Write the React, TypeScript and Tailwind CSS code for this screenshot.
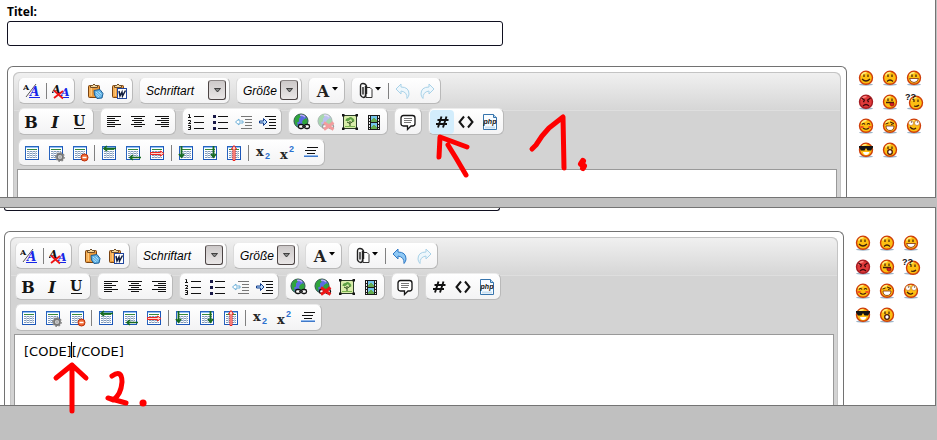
import React from "react";

type Kids = { children?: React.ReactNode };

function Icon({ children, dim }: Kids & { dim?: boolean }) {
  return (
    <svg
      width="18"
      height="18"
      viewBox="0 0 18 18"
      fill="none"
      aria-hidden="true"
      className={dim ? "opacity-40" : ""}
    >
      {children}
    </svg>
  );
}

function Tool({ label, active, dim, children }: Kids & { label: string; active?: boolean; dim?: boolean }) {
  return (
    <button
      type="button"
      title={label}
      aria-label={label}
      className={
        "flex h-6 w-6 items-center justify-center rounded-sm " + (active ? "bg-[#d3edfc]" : "")
      }
    >
      <Icon dim={dim}>{children}</Icon>
    </button>
  );
}

function Group({ children }: Kids) {
  return (
    <div className="relative flex h-[27px] shrink-0 items-center rounded-md border border-[#b9b9b9] border-t-[#ececec] border-l-[#dadada] bg-gradient-to-b from-white to-[#f3f3f4] px-px">
      {children}
    </div>
  );
}

function Sep() {
  return (
    <div className="flex w-[5px] justify-center">
      <div className="h-4 w-px bg-[#808080]" />
    </div>
  );
}

function FontSelect({ label, width }: { label: string; width: string }) {
  return (
    <Group>
      <select
        aria-label={label}
        className={
          "h-6 appearance-none bg-transparent pl-[5px] font-['Liberation_Sans',Arial,sans-serif] text-xs text-black italic outline-none " +
          width
        }
      >
        <option>{label}</option>
      </select>
      <span className="pointer-events-none absolute top-[2px] right-[3px] flex h-5 w-[18px] items-center justify-center rounded-[3px] border border-[#4c4444] border-t-[#8b8585] bg-gradient-to-b from-[#cdc9c9] to-[#e9e6e6]">
        <svg width="7" height="5" viewBox="0 0 7 5" aria-hidden="true">
          <path d="M.5 .5h6L3.5 4z" fill="#888" stroke="#222" strokeWidth=".8" />
        </svg>
      </span>
    </Group>
  );
}

function DropTool({ label, children }: Kids & { label: string }) {
  return (
    <button type="button" aria-label={label} title={label} className="flex h-6 w-[33px] items-center pl-1">
      <Icon>{children}</Icon>
      <svg width="7" height="4" viewBox="0 0 7 4" className="-mt-1" aria-hidden="true">
        <path d="M0 0h6L3 3.500z" fill="#000" />
      </svg>
    </button>
  );
}

const serif = "DejaVu Serif, serif";
const sans = "Liberation Sans, sans-serif";

function DoubleA({ removed }: { removed?: boolean }) {
  return (
    <>
      {removed ? (
        <>
          <text x="0" y="11" fontFamily={serif} fontSize="11" fontWeight="700" fontStyle="italic" fill="#111">A</text>
          <text x="9" y="14" fontFamily={serif} fontSize="11" fontWeight="700" fontStyle="italic" fill="#1626e8">A</text>
          <path d="M11 15.500h6" stroke="#1626e8" />
          <path d="M2 8.500l9 8M11 9L2 16" stroke="#ee1515" strokeWidth="1.800" />
        </>
      ) : (
        <>
          <text x="0" y="8" fontFamily={serif} fontSize="8" fontWeight="700" fill="#111">A</text>
          <path d="M3 15L13 2" stroke="#555" />
          <text x="7" y="14" fontFamily={serif} fontSize="12" fontWeight="700" fontStyle="italic" fill="#1626e8">A</text>
          <path d="M6 15.500h11" stroke="#1626e8" />
        </>
      )}
    </>
  );
}

function Clipboard() {
  return (
    <>
      <rect x="2.500" y="3.500" width="11" height="12" rx="1" fill="#e9983a" stroke="#7a4310" />
      <path d="M4 5v9M5.500 5v9" stroke="#ffc777" />
      <path d="M4.500 5.500v-2h2q1.500-3 3 0h2v2z" fill="#f4d69b" stroke="#6b4a26" />
    </>
  );
}

function PasteText() {
  return (
    <>
      <Clipboard />
      <path d="M8 8.500l6-1 3 4-1 4.500-5 .5L8.500 13z" fill="#5fb2e4" stroke="#1e5e96" />
      <path d="M10 10l4.500 4M10 12.500l3 2.500M12.500 9.500l3 3" stroke="#c7eaff" strokeWidth=".8" />
    </>
  );
}

function PasteWord() {
  return (
    <>
      <Clipboard />
      <rect x="7.500" y="6.500" width="9" height="10" fill="#fff" stroke="#21469e" />
      <path d="M9 9l1 5 2-4 .5 4L15.500 8.500" stroke="#111d3d" strokeWidth="1.500" />
    </>
  );
}

function Letter({ kind }: { kind: "B" | "I" | "U" }) {
  return (
    <>
      <text
        x="8"
        y={kind === "U" ? 13 : 15}
        textAnchor="middle"
        fontFamily={serif}
        fontSize={kind === "U" ? 14 : 16}
        fontWeight="700"
        fontStyle={kind === "I" ? "italic" : "normal"}
        fill="#151515"
      >
        {kind}
      </text>
      {kind === "U" && <path d="M3 15.500h11" stroke="#151515" />}
    </>
  );
}

function Align({ kind }: { kind: "left" | "center" | "right" }) {
  const rows = [14, 8, 12, 8, 14, 8];
  return (
    <g shapeRendering="crispEdges" fill="#111">
      {rows.map((w, i) => (
        <rect
          key={i}
          x={kind === "left" ? 2 : kind === "right" ? 16 - w : 9 - w / 2}
          y={3 + i * 2}
          width={w}
          height="1"
        />
      ))}
    </g>
  );
}

function NumberList() {
  return (
    <>
      <path d="M7 3.500h10M7 9.500h10M7 15.500h10" stroke="#111" shapeRendering="crispEdges" />
      <path d="M1.500 1.500h1v3M1 4.500h3M1 7.500h2.500v1.500L1.500 10.500h2.500M1 12.500h2.500v4H1M1.500 14.500h2" stroke="#111" />
    </>
  );
}

function BulletList() {
  return (
    <g shapeRendering="crispEdges">
      <path d="M7 3.500h10M7 9.500h10M7 15.500h10" stroke="#111" />
      <path d="M2 2h3v3H2zM2 8h3v3H2zM2 14h3v3H2z" fill="#181848" />
    </g>
  );
}

function Indent({ out }: { out?: boolean }) {
  return (
    <>
      <g stroke={out ? "#777" : "#111"} shapeRendering="crispEdges">
        <path d="M6 3.500h11M10 6.500h7M10 9.500h7M10 12.500h7M6 15.500h11" />
      </g>
      {out ? (
        <path d="M.5 9l3.500-3v2h4v2H4v2z" fill="#fff" stroke="#6fb0d8" />
      ) : (
        <path d="M8 9L4.500 5.500V8h-4v2h4v2.500z" fill="#bfe1ff" stroke="#123c8c" />
      )}
    </>
  );
}

function Globe({ cut }: { cut?: boolean }) {
  return (
    <>
      <circle cx="8" cy="8" r="7" fill="#5a6be0" stroke="#25532d" />
      <path d="M2 5q2-3.500 5-3.500l1 2-2 2 0 3-2 1 1 3-2 0q-2-3-1-7.500zM10 7l3-2 1.500 2-.5 4-4 1-1-3z" fill="#2fa53b" />
      <path d="M7 2.500q3-1 5 1.500" stroke="#b9a8f5" strokeWidth="1.500" />
      <rect x="5.500" y="11.500" width="5" height="4" rx="1.800" fill="#fff" stroke="#111" strokeWidth="1.300" />
      <rect x="11.500" y="11.500" width="5" height="4" rx="1.800" fill="#fff" stroke="#111" strokeWidth="1.300" />
      <path d="M9 13.500h4" stroke="#333" />
      {cut && <path d="M7 9.500l9.500 7M16.500 9.500L7 16.500" stroke="#ed1717" strokeWidth="2.800" />}
    </>
  );
}

function Picture() {
  return (
    <>
      <rect x="2.500" y="2.500" width="13" height="13" fill="#d9edaa" stroke="#2a3a28" />
      <path d="M9 13.500V8M9.500 10l3-2M9 10.500L6 9" stroke="#284b19" />
      <path d="M4.500 8q0-3 3-3 2-2 4 0 2.500 1 1.500 4l-2-1-1-2-2.500 2z" fill="#5da044" />
      <path d="M4 13.500h10" stroke="#7bb551" />
      <path d="M1 1h2.500v2.500H1zM14.500 1H17v2.500h-2.500zM1 14.500h2.500V17H1zM14.500 14.500H17V17h-2.500z" fill="#151515" />
    </>
  );
}

function Film() {
  return (
    <g shapeRendering="crispEdges">
      <path d="M3 2h12v15H3z" fill="#1a1a1a" />
      <path d="M6 3h6v6H6zM6 10h6v6H6z" fill="#74c4ea" />
      <path d="M6 7l3-2 3 2v2H6zM6 14l3-2 3 2v2H6z" fill="#67ad52" />
      <path d="M4.500 3v13M13.500 3v13" stroke="#eee" strokeDasharray="2 1" />
    </g>
  );
}

function Quote() {
  return (
    <>
      <path d="M4.500 2.500h9q2.500 0 2.500 2.500v5.500q0 2.500-2.500 2.500H12l-3.500 3.500V13h-4Q2 13 2 10.500V5q0-2.500 2.500-2.500z" fill="#fff" stroke="#151515" strokeWidth="1.300" />
      <path d="M5 5.500h8M5 7.500h8M5 9.500h7" stroke="#777" shapeRendering="crispEdges" />
    </>
  );
}

function Php() {
  return (
    <>
      <path d="M2.500 1.500h10l3 3v12h-13z" fill="#f8fcff" stroke="#3674ac" />
      <path d="M12.500 1.500v3h3" fill="#b9d8ef" stroke="#3674ac" />
      <path d="M4 14.500h10" stroke="#c8dff0" strokeWidth="2" />
      <text x="9" y="11" textAnchor="middle" fontFamily={sans} fontSize="7" fontWeight="700" fontStyle="italic" fill="#111">
        php
      </text>
    </>
  );
}

function Undo({ redo, pale }: { redo?: boolean; pale?: boolean }) {
  return (
    <g transform={redo ? "translate(18 0) scale(-1 1)" : undefined}>
      <path
        d="M2 7l5-5v3q8 0 8 7 0 2.500-2 4.500Q13.500 10 7 9v3z"
        fill={pale ? "#eef7fc" : "#8fc8f4"}
        stroke={pale ? "#a9d2e8" : "#2f79c5"}
      />
    </g>
  );
}

type TableKind =
  | "table" | "props" | "delete"
  | "rowAbove" | "rowBelow" | "rowDelete"
  | "colLeft" | "colRight" | "colDelete";

function TableIcon({ kind }: { kind: TableKind }) {
  return (
    <>
      <g shapeRendering="crispEdges">
        <rect x="2.500" y="2.500" width="13" height="13" fill="#fff" stroke="#2763bf" />
        <path d="M3 3.500h12" stroke="#8fc2f5" />
        <path d="M4 5.500h10" stroke="#36883a" />
        <path d="M4 7.500h10M4 9.500h10M4 11.500h10M4 13.500h10" stroke="#8199b8" />
        <path d="M6.500 7v7M9.500 7v7M12.500 7v7" stroke="#c2d0e2" />
        <path d="M15.500 3v13M3 15.500h13" stroke="#1a55b8" />
      </g>
      {kind === "props" && (
        <>
          <circle cx="13" cy="13" r="3" fill="#ddd" stroke="#777" strokeWidth="1.800" />
          <circle cx="13" cy="13" r="4.300" stroke="#888" strokeWidth="1.200" strokeDasharray="1.800 1.500" />
          <circle cx="13" cy="13" r="1" fill="#fff" stroke="#777" strokeWidth=".6" />
        </>
      )}
      {kind === "delete" && (
        <>
          <circle cx="13.500" cy="13.500" r="3.500" fill="#ef6a35" stroke="#bd2d08" />
          <path d="M11.500 13.500h4" stroke="#fff" strokeWidth="1.500" />
        </>
      )}
      {kind === "rowAbove" && <path d="M16 4.500H4M7 2L4 4.500 7 7" stroke="#176a20" strokeWidth="1.600" />}
      {kind === "rowBelow" && <path d="M17 13.500H6M9 11l-3 2.500L9 16" stroke="#176a20" strokeWidth="1.600" />}
      {kind === "rowDelete" && (
        <path d="M2.500 8.500h10V7l3.500 2.500-3.500 2.500v-1.500h-10z" fill="#ffd5ca" stroke="#ed2520" />
      )}
      {kind === "colLeft" && <path d="M4.500 2v11M2 10l2.500 3L7 10" stroke="#176a20" strokeWidth="1.800" />}
      {kind === "colRight" && <path d="M12.500 2v11M10 10l2.500 3 2.500-3" stroke="#176a20" strokeWidth="1.800" />}
      {kind === "colDelete" && (
        <path d="M8 16.500V5H6.500L9 1.500 11.500 5H10v11.500z" fill="#ffd5ca" stroke="#ed2520" />
      )}
    </>
  );
}

function Script({ sup }: { sup?: boolean }) {
  return (
    <>
      <text x="2" y={sup ? 15 : 12} fontFamily={serif} fontSize="13" fontWeight="700" fill="#252525">x</text>
      <text x="11" y={sup ? 8 : 15} fontFamily={sans} fontSize="9" fontWeight="700" fill="#2b70cf">2</text>
    </>
  );
}

function Toolbar({ codeActive, history, outlined }: { codeActive?: boolean; history?: boolean; outlined?: boolean }) {
  const tables: [TableKind, string][][] = [
    [["table", "Tabelle"], ["props", "Tabelleneigenschaften"], ["delete", "Tabelle löschen"]],
    [["rowAbove", "Zeile oberhalb"], ["rowBelow", "Zeile unterhalb"], ["rowDelete", "Zeile entfernen"]],
    [["colLeft", "Spalte links"], ["colRight", "Spalte rechts"], ["colDelete", "Spalte löschen"]],
  ];
  return (
    <div role="toolbar" className="flex flex-col gap-1 px-1 pt-1 pb-[3px]">
      <div className="flex gap-1.5">
        <Group>
          <Tool label="Editor-Modus"><DoubleA /></Tool>
          <Sep />
          <Tool label="Formatierung entfernen"><DoubleA removed /></Tool>
        </Group>
        <Group>
          <Tool label="Als Text einfügen"><PasteText /></Tool>
          <Tool label="Aus Word einfügen"><PasteWord /></Tool>
        </Group>
        <FontSelect label="Schriftart" width="w-[87px]" />
        <FontSelect label="Größe" width="w-[62px]" />
        <Group>
          <DropTool label="Textfarbe">
            <text x="9" y="15" textAnchor="middle" fontFamily={serif} fontSize="16" fontWeight="700" fill="#222">A</text>
          </DropTool>
        </Group>
        <Group>
          <DropTool label="Anhänge">
            <path d="M9 5.500h4l2 2v8H9z" fill="#fff" stroke="#333" />
            <path d="M8.500 4v9q0 2.500-2 2.500t-3-2.500V4q0-2.500 2.500-2.500T9.500 4v8M6 5v7.500" stroke="#222" strokeWidth="1.400" />
          </DropTool>
          <Sep />
          <Tool label="Rückgängig"><Undo pale={!history} /></Tool>
          <Tool label="Wiederherstellen"><Undo redo pale /></Tool>
        </Group>
      </div>
      <div className="flex gap-1.5">
        <Group>
          <Tool label="Fett"><Letter kind="B" /></Tool>
          <Tool label="Kursiv"><Letter kind="I" /></Tool>
          <Tool label="Unterstrichen"><Letter kind="U" /></Tool>
        </Group>
        <Group>
          <Tool label="Linksbündig"><Align kind="left" /></Tool>
          <Tool label="Zentriert"><Align kind="center" /></Tool>
          <Tool label="Rechtsbündig"><Align kind="right" /></Tool>
        </Group>
        <Group>
          <Tool label="Nummerierte Liste"><NumberList /></Tool>
          <Tool label="Aufzählung"><BulletList /></Tool>
          <Tool label="Einzug verkleinern"><Indent out /></Tool>
          <Tool label="Einzug vergrößern"><Indent /></Tool>
        </Group>
        <Group>
          <Tool label="Link einfügen"><Globe /></Tool>
          <Tool label="Link entfernen" dim={!outlined}><Globe cut /></Tool>
          <Tool label="Grafik einfügen"><Picture /></Tool>
          <Tool label="Video einfügen"><Film /></Tool>
        </Group>
        <Group>
          <Tool label="Zitat"><Quote /></Tool>
        </Group>
        <Group>
          <Tool label="Code" active={codeActive}>
            <path d="M8.500 3.500L5 14.500M13.500 3.500L10 14.500M4.500 7h11M3 11h11" stroke="#111" strokeWidth="1.900" />
          </Tool>
          <Tool label="HTML-Code">
            <path d="M7 3.500L2.500 9 7 14.500M11 3.500L15.500 9 11 14.500" stroke="#151515" strokeWidth="2" />
          </Tool>
          <Tool label="PHP-Code"><Php /></Tool>
        </Group>
      </div>
      <div className="flex">
        <Group>
          {tables.map((set, i) => (
            <React.Fragment key={i}>
              {set.map(([kind, label]) => (
                <Tool key={kind} label={label}><TableIcon kind={kind} /></Tool>
              ))}
              <Sep />
            </React.Fragment>
          ))}
          <Tool label="Tiefgestellt"><Script /></Tool>
          <Tool label="Hochgestellt"><Script sup /></Tool>
          <Tool label="Horizontale Linie">
            <g shapeRendering="crispEdges">
              <path d="M5 3.500h11M3 6.500h11M5 9.500h8" stroke="#111" />
              <path d="M2 11h14v2H2z" fill="#8fb9ee" />
              <path d="M2 12.500h14" stroke="#3f78c8" />
            </g>
          </Tool>
        </Group>
      </div>
    </div>
  );
}

type Mood =
  | "smile" | "frown" | "grin" | "angry" | "tongue" | "confused"
  | "blush" | "laugh" | "roll" | "cool" | "shock";

const moods: Mood[] = [
  "smile", "frown", "grin", "angry", "tongue", "confused", "blush", "laugh", "roll", "cool", "shock",
];

function Face({ mood }: { mood: Mood }) {
  const red = mood === "angry";
  const eyes = ["smile", "frown", "grin", "tongue", "confused", "shock"].includes(mood);
  return (
    <svg width="18" height="18" viewBox="0 0 18 18" fill="none" aria-hidden="true" className="overflow-visible">
      <ellipse cx="9" cy="15.500" rx="7" ry="1.200" fill="#9db4c8" />
      <g transform={mood === "confused" ? "translate(2 1)" : undefined}>
        <circle cx="9" cy="8.800" r="6.500" fill={red ? "#e03a3a" : "#fdbf12"} stroke={red ? "#a51c22" : "#cf3d08"} strokeWidth="1.400" />
        <path d="M4.500 6.500Q6 3.500 9.500 3.500" stroke={red ? "#ff8580" : "#ffee7a"} strokeWidth="1.500" />
        {eyes && <path d="M7 5.500v2.500M11 5.500v2.500" stroke="#40200a" strokeWidth="1.200" />}
        {mood === "smile" && <path d="M5 10q4 4 8 0" stroke="#40200a" strokeWidth="1.200" />}
        {mood === "frown" && <path d="M6 12.500q3-3 6 0" stroke="#40200a" strokeWidth="1.200" />}
        {mood === "grin" && <path d="M4.500 9.500h9q-1 4-4.500 4t-4.500-4z" fill="#fff" stroke="#7c2a08" strokeWidth=".8" />}
        {red && <path d="M4.500 5l3.500 2.500M13.500 5L10 7.500M6 8.500h1.500M10.500 8.500H12M6 13q3-3 6 0" stroke="#42080c" strokeWidth="1.300" />}
        {mood === "tongue" && (
          <>
            <path d="M5 9.500h8" stroke="#40200a" strokeWidth="1.500" />
            <path d="M9 10h4v2q-2 2.500-4 0z" fill="#db1f22" stroke="#811010" strokeWidth=".6" />
          </>
        )}
        {mood === "confused" && <path d="M7 12q3 1 5-1" stroke="#40200a" strokeWidth="1.200" />}
        {mood === "blush" && (
          <>
            <path d="M5 7.500q1.500-2 3 0M10 7.500q1.500-2 3 0M6 11q3 2.500 6 0" stroke="#40200a" strokeWidth="1.200" />
            <path d="M3.500 9h3v2h-3zM11.500 9h3v2h-3z" fill="#f35220" />
          </>
        )}
        {mood === "laugh" && (
          <>
            <path d="M4.500 7l3-1M9 5l4 1.500-3 1" stroke="#40200a" />
            <path d="M5 9h8q0 4.500-4 4.500T5 9z" fill="#fff" stroke="#7c2a08" strokeWidth=".8" />
          </>
        )}
        {mood === "roll" && (
          <>
            <circle cx="6" cy="6" r="2.500" fill="#fff" stroke="#bd6d16" strokeWidth=".6" />
            <circle cx="12" cy="6" r="2.500" fill="#fff" stroke="#bd6d16" strokeWidth=".6" />
            <path d="M6.500 4.500v1M12.500 4.500v1M5 10q3 3.500 6 1" stroke="#40200a" strokeWidth="1.200" />
          </>
        )}
        {mood === "cool" && (
          <>
            <path d="M2 5h14v1.500l-2 3h-3.500L9 7 7.500 9.500H4L2 6.500z" fill="#151515" />
            <path d="M6 11h6.500q-1 3-3.500 3t-3-3z" fill="#fff" />
          </>
        )}
        {mood === "shock" && <circle cx="9" cy="11" r="2.300" fill="#fff" stroke="#4a180a" strokeWidth="1.300" />}
      </g>
      {mood === "confused" && (
        <text x="0" y="7" fontFamily={sans} fontSize="9" fontWeight="700" fill="#111">??</text>
      )}
    </svg>
  );
}

function Editor({ id, text, rows, ...bar }: {
  id: string;
  text?: string;
  rows: string;
  codeActive?: boolean;
  history?: boolean;
  outlined?: boolean;
}) {
  return (
    <div className="min-w-0 flex-1 rounded-t-md border border-b-0 border-[#727272] px-[5px] pt-[5px]">
      <div className="rounded-t-md border border-b-0 border-[#c4c4c4] bg-[#d3d3d3]">
        <div className="rounded-t-md bg-[linear-gradient(to_bottom,#f0f0f0,#d6d6d6_37px,#dedede_37px,#dedede_38px,#d3d3d3_38px)]">
          <Toolbar {...bar} />
        </div>
        <div className="relative mx-[3px]">
          <textarea
            id={id}
            aria-label="Nachricht"
            defaultValue={text}
            className={
              "block w-full resize-none border border-b-0 border-[#999] bg-white px-[9px] py-2 font-['DejaVu_Sans',Verdana,sans-serif] text-[13px] leading-[18px] text-black outline-none " +
              rows
            }
          />
          {text && <span className="absolute top-2 left-[57px] h-4 w-px bg-black" />}
        </div>
      </div>
    </div>
  );
}

function Smileys() {
  return (
    <div className="grid shrink-0 auto-rows-[24px] grid-cols-[24px_24px_24px] self-start">
      {moods.map((mood) => (
        <button key={mood} type="button" aria-label={mood} className="flex items-center justify-center">
          <Face mood={mood} />
        </button>
      ))}
    </div>
  );
}

export default function App() {
  return (
    <div className="flex min-h-screen flex-col gap-[9px] bg-[#c0c0c0] text-black">
      <section className="relative mr-px border-r border-b border-[#747474] bg-white pl-[7px]">
        <label htmlFor="titel" className="block pt-[3px] font-['Noto_Sans',Tahoma,sans-serif] text-xs leading-[18px] font-bold">
          Titel:
        </label>
        <input id="titel" type="text" className="block h-[25px] w-[496px] max-w-full rounded-[3px] border border-[#101020] px-1 outline-none" />
        <div className="mt-5 flex gap-[7px] pr-[9px]">
          <Editor id="nachricht-1" rows="h-7" codeActive />
          <Smileys />
        </div>
        <svg className="pointer-events-none absolute top-0 left-0 overflow-visible" width="600" height="180" fill="none" stroke="#fe0000" strokeWidth="5" strokeLinecap="round" strokeLinejoin="round" aria-hidden="true">
          <path d="M439 157L440 137L467 147M448 145L456 158L466 175" />
          <path d="M532 149L536 145L542 136L549 128L563 117L564 168" />
          <path d="M583 161L581 164L584 166L583 168" strokeWidth="6" />
        </svg>
      </section>

      <section className="relative mr-px border border-l-0 border-[#747474] bg-white pl-1">
        <div className="h-[3px] w-[496px] max-w-full rounded-b-[3px] border border-t-0 border-[#101020]" />
        <div className="mt-5 flex gap-[7px] pr-3">
          <Editor id="nachricht-2" rows="h-[71px]" text="[CODE][/CODE]" history outlined />
          <Smileys />
        </div>
        <svg className="pointer-events-none absolute top-0 left-0 overflow-visible" width="160" height="210" fill="none" stroke="#fe0000" strokeWidth="5" strokeLinecap="round" strokeLinejoin="round" aria-hidden="true">
          <path d="M72 203V157M56 170L72 157L86 170" />
          <path d="M112 168Q122 161 122 174Q121 187 113 192L108 190L126 195" />
          <path d="M143 195h.1" strokeWidth="7" />
        </svg>
      </section>
    </div>
  );
}
